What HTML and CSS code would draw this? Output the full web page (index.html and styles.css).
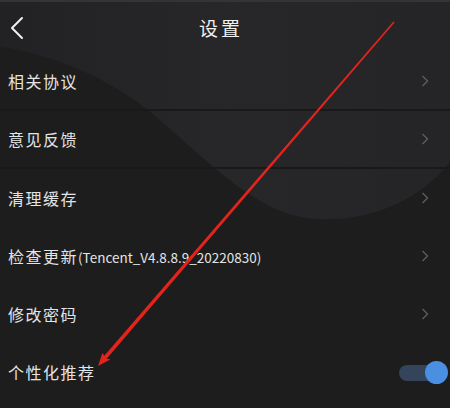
FILE: index.html
```html
<!DOCTYPE HTML>
<html lang="zh-CN">
<head>
<meta name="viewport" content="width=device-width, initial-scale=1">
<title>设置</title>
<link rel="stylesheet" href="styles.css">
</head>
<body>

<div class="screen">
  <!-- decorative backdrop shapes -->
  <svg class="backdrop" viewBox="0 0 450 408" preserveAspectRatio="none">
    <defs>
      <linearGradient id="topShade" x1="0" y1="0" x2="1" y2="0">
        <stop offset="0" stop-color="#222225"/>
        <stop offset="0.5" stop-color="#27272a"/>
        <stop offset="1" stop-color="#252528"/>
      </linearGradient>
    </defs>
    <rect width="450" height="408" fill="#1d1d1d"/>
    <path d="M0,0 H450 V160 C420,200 370,220 320,218 C260,216 220,170 150,110 C100,70 40,50 0,45 Z" fill="url(#topShade)"/>
  </svg>

  <header class="topbar">
    <a class="back" href="#">
      <svg width="14" height="24" viewBox="0 0 14 24"><path d="M12 2 L2 12 L12 22" fill="none" stroke="#f0f0f0" stroke-width="2" stroke-linecap="round" stroke-linejoin="round"/></svg>
    </a>
    <h1>设置</h1>
  </header>

  <ul class="settings">
    <li class="row divided">
      <span class="label">相关协议</span>
      <svg class="chev" width="8" height="12" viewBox="0 0 8 12"><path d="M1.5 1 L6.5 6 L1.5 11" fill="none" stroke="#5c5c60" stroke-width="1.4"/></svg>
    </li>
    <li class="row divided">
      <span class="label">意见反馈</span>
      <svg class="chev" width="8" height="12" viewBox="0 0 8 12"><path d="M1.5 1 L6.5 6 L1.5 11" fill="none" stroke="#5c5c60" stroke-width="1.4"/></svg>
    </li>
    <li class="row">
      <span class="label">清理缓存</span>
      <svg class="chev" width="8" height="12" viewBox="0 0 8 12"><path d="M1.5 1 L6.5 6 L1.5 11" fill="none" stroke="#5c5c60" stroke-width="1.4"/></svg>
    </li>
    <li class="row">
      <span class="label">检查更新<span class="version">(Tencent_V4.8.8.9_20220830)</span></span>
      <svg class="chev" width="8" height="12" viewBox="0 0 8 12"><path d="M1.5 1 L6.5 6 L1.5 11" fill="none" stroke="#5c5c60" stroke-width="1.4"/></svg>
    </li>
    <li class="row">
      <span class="label">修改密码</span>
      <svg class="chev" width="8" height="12" viewBox="0 0 8 12"><path d="M1.5 1 L6.5 6 L1.5 11" fill="none" stroke="#5c5c60" stroke-width="1.4"/></svg>
    </li>
    <li class="row">
      <span class="label">个性化推荐</span>
      <span class="switch on"><span class="track"></span><span class="knob"></span></span>
    </li>
  </ul>

  <!-- red annotation arrow drawn over the screenshot -->
  <svg class="annotation" viewBox="0 0 450 408">
    <polygon points="394.6,20.5 393.4,19.5 102.8,355.6 105.6,358.0" fill="#e3241c"/>
    <polygon points="98,364 110.4,357.6 105.5,356.2 102.5,350.7" fill="#e3241c"/>
  </svg>
</div>

</body>
</html>
```

FILE: styles.css
```css
/* Page reset */
body {
  margin: 0;
  padding: 0;
  background: #1d1d1d;
  font-family: "Noto Sans CJK SC", "Noto Sans", sans-serif;
}

/* Phone screen */
.screen {
  position: relative;
  width: 450px;
  height: 408px;
  overflow: hidden;
  border-top: 2px solid #343436;
  box-sizing: border-box;
}

.backdrop {
  position: absolute;
  top: 0;
  left: 0;
  width: 100%;
  height: 100%;
  z-index: 0;
}

/* Top bar */
.topbar {
  position: relative;
  z-index: 1;
  height: 51px;
  display: flex;
  align-items: center;
  justify-content: center;
}

.back {
  position: absolute;
  left: 10px;
  top: 14px;
  display: flex;
}

.topbar h1 {
  margin: 0;
  padding-right: 8px;
  font-size: 19px;
  font-weight: normal;
  letter-spacing: 3px;
  color: #f0f0f0;
}

/* Settings list */
.settings {
  position: relative;
  z-index: 1;
  list-style: none;
  margin: 0;
  padding: 0;
}

.row {
  height: 58px;
  display: flex;
  align-items: center;
  justify-content: space-between;
  padding: 0 21px 0 8px;
  box-sizing: border-box;
}

.row.divided {
  border-bottom: 2px solid #19191a;
}

.label {
  font-size: 16px;
  letter-spacing: 1.5px;
  color: #e4e4e4;
}

.version {
  font-size: 13.5px;
  letter-spacing: 0;
}

.chev {
  display: block;
}

/* Toggle switch */
.switch {
  position: relative;
  width: 49px;
  height: 23px;
  margin-right: -19px;
}

.switch .track {
  position: absolute;
  left: 0;
  top: 4px;
  width: 42px;
  height: 16px;
  border-radius: 8px;
  background: #34445a;
}

.switch .knob {
  position: absolute;
  right: 0;
  top: 0;
  width: 23px;
  height: 23px;
  border-radius: 50%;
  background: #4b8fe3;
}

/* Annotation overlay */
.annotation {
  position: absolute;
  top: 0;
  left: 0;
  width: 450px;
  height: 408px;
  z-index: 2;
  pointer-events: none;
}
```
